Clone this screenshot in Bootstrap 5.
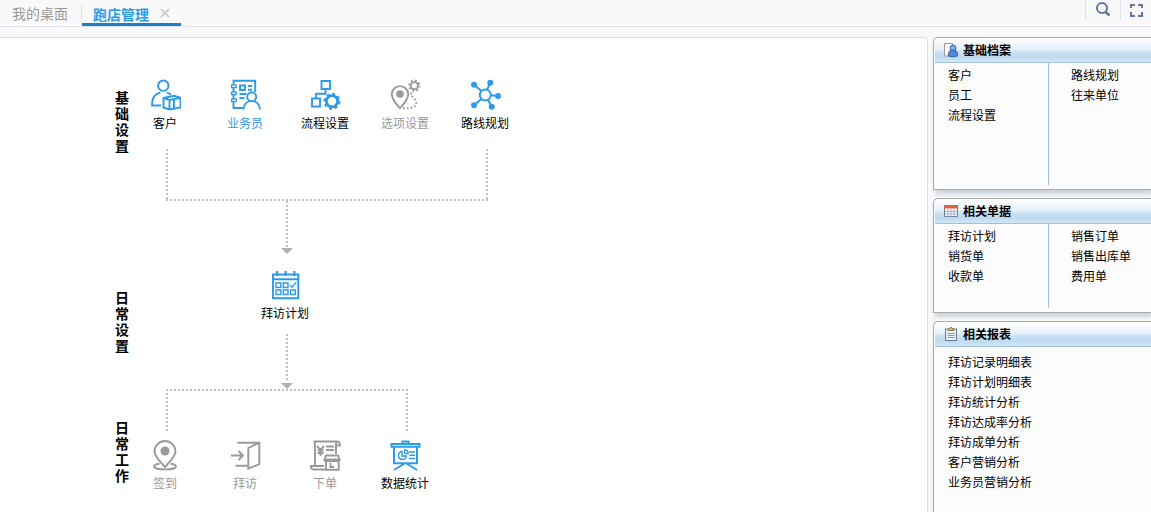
<!DOCTYPE html>
<html lang="zh-CN">
<head>
<meta charset="utf-8">
<meta name="viewport" content="width=device-width, initial-scale=1">
<title>跑店管理</title>
<link href="https://cdn.jsdelivr.net/npm/bootstrap@5.3.0/dist/css/bootstrap.min.css" rel="stylesheet">
<style>
body{font:12px/16px "Noto Sans CJK SC",sans-serif;color:#000;background:#f9f9f9}
a{color:inherit;text-decoration:none}
.topbar{height:27px;border-bottom:1px solid #e4e4ee}
.tab-item{font-size:14px;line-height:20px;color:#999;padding:3px 13px 0 12px;height:26px}
.tab-item.active{color:#2e9be6;font-weight:700;padding:0 10px 0 11px;border-bottom:3px solid #1a80c8}
.tab-item button,.tool{border:0;background:none;padding:0;line-height:0}
.tab-item button{margin:3px 0 0 10px}
.tab-sep{width:1px;height:16px;margin-top:5px;background:#e0e0ec}
.tool{width:35px;height:21px;border-left:1px solid #e4e4ee;padding-bottom:2px}
.tool:last-child{width:31px}
.workspace{padding-top:10px;gap:5px}
.canvas{background:#fff;border:1px solid #dcdcdc;border-left:0;border-bottom:0;border-radius:0 4px 0 0;padding-left:115px}
.stages{width:14px;padding-top:51px}
.stages h2{font-size:14px;line-height:16px;font-weight:700;margin:0 0 136px}
.stages h2+h2{margin-bottom:66px}
.stages h2:last-child{margin-bottom:0}
.flow{padding-top:41px}
.node{width:72px;display:flex;flex-direction:column;align-items:center;gap:4px;color:#000;white-space:nowrap}
.node svg{width:32px;height:32px;color:#2e9be6;fill:none;stroke:currentColor;stroke-width:1.9}
.node .solid{fill:currentColor;stroke:none}
.node.off,.node.off svg{color:#999}
.node.current{color:#2e9be6}
.link-lines{display:block;fill:none;stroke:#c0c0c0;stroke-width:2;stroke-dasharray:2 2}
.link-lines polygon{fill:#b0b0b0;stroke:none}
.mid{margin:14px 0 0 120px}
aside{width:218px;gap:8px}
.pane{background:#fcfcfc;border:1px solid #aaa;border-right:0;border-radius:5px 0 0 0;box-shadow:2px 4px 5px #c8d2da}
.pane:last-child{border-bottom:0}
.pane h3{font-size:12px;line-height:24px;height:25px;font-weight:700;margin:0 0 0 1px;padding-left:9px;gap:5px;background:linear-gradient(#fff,#e8f2fa 45%,#c6dff2 62%,#bedaf0 80%,#d3e7f6);border-bottom:1px solid #a3c1dc;border-radius:4px 0 0 0}
.pane ul{list-style:none;margin:0;padding:2px 0 0 14px;line-height:20px}
.pane .first{width:115px;border-right:1px solid #9fc0da}
.pane .first+ul{padding-left:22px}
.archive{height:122px}
.docs{height:84px}
.pane .reports{padding-top:5px}
</style>
</head>
<body class="vh-100 d-flex flex-column overflow-hidden">
<header class="topbar d-flex flex-shrink-0">
  <nav class="d-flex">
    <a class="tab-item" href="#">我的桌面</a>
    <span class="tab-sep"></span>
    <div class="tab-item active d-flex align-items-center"><a class="pt-1" href="#">跑店管理</a><button type="button" aria-label="关闭"><svg width="12" height="12" stroke="#c4c4c4" stroke-width="1.5"><path d="M2 2l8 8M10 2l-8 8"/></svg></button></div>
  </nav>
  <div class="d-flex ms-auto">
    <button class="tool" type="button" aria-label="搜索"><svg width="16" height="18" fill="none" stroke="#62759b" stroke-width="2"><circle cx="7" cy="7" r="5"/><path d="M10.500 11l4 3.500" stroke-width="2.500"/></svg></button>
    <button class="tool" type="button" aria-label="全屏"><svg width="14" height="18" fill="none" stroke="#62759b" stroke-width="2"><path d="M2 7V4h4M9 4h4v3M13 11v4H9M6 15H2v-4"/></svg></button>
  </div>
</header>
<div class="workspace d-flex flex-grow-1">
  <main class="canvas flex-grow-1 d-flex">
    <div class="stages">
      <h2>基础设置</h2><h2>日常设置</h2><h2>日常工作</h2>
    </div>
    <div class="flow">
      <div class="d-flex gap-2">
        <a class="node" href="#"><svg viewBox="0 0 32 32"><circle cx="14.300" cy="6.700" r="5.200"/><path d="M12 26.500H3.200C2.500 19.500 6 15 11.500 13.400M17.500 13.400c2 .5 3.200 1.200 4.500 2.400M14.500 19l11-2.200 6 2v9.700l-11 2-6-2zM14.500 19l6 2 11-2.200M20.500 21v9.500M25 20v9"/></svg>客户</a>
        <a class="node current" href="#"><svg viewBox="0 0 32 32"><path d="M13.500 29H4.500V1.800h21.700V13M11 6.500h5v4.500h-5zM19 7h4M19 10.700h4M10.500 15h7M10.500 19h5M14.500 30.500c0-4 2.500-7 6-8.500M25 22c3.500 1.500 5.800 4.500 6 8.500"/><circle cx="22.700" cy="17.800" r="4.500"/><g fill="#fff" stroke-width="1.300"><rect x="2.600" y="6" width="4.600" height="2.600"/><rect x="2.600" y="13" width="4.600" height="2.600"/><rect x="2.600" y="20" width="4.600" height="2.600"/></g></svg>业务员</a>
        <a class="node" href="#"><svg viewBox="0 0 32 32"><path d="M12.500 2h8.500v8h-8.500zM3 19.500h8v8H3zM16.500 10v4.800H7v4.700"/><circle cx="23" cy="22.300" r="5.600" stroke-width="2.800"/><circle cx="23" cy="22.300" r="7.500" stroke-width="2" stroke-dasharray="2.900 2.990"/></svg>流程设置</a>
        <a class="node off" href="#"><svg viewBox="0 0 32 32"><path d="M11 29.200C8 26 2.800 20 2.800 15.300a8.200 8.200 0 0 1 16.400 0C19.200 20 14 26 11 29.200z"/><circle class="solid" cx="11" cy="15" r="3.800"/><circle cx="25.300" cy="6.700" r="3.600"/><circle cx="25.300" cy="6.700" r="5.200" stroke-dasharray="1.800 2.280"/><path d="M22.500 13.500c-1 2.500 0 3.500 2 5.500 3.500 3.500 4 7-.5 9.200-3 1.200-7 1.200-11.500 1" stroke-dasharray="1.800 1.900"/></svg>选项设置</a>
        <a class="node" href="#"><svg viewBox="0 0 32 32"><circle cx="16.300" cy="16" r="5.500" stroke-width="2"/><path d="M12.400 12L5 5.700M18 10.800l3.300-7.100M21.800 16.200l7.500.8M19 20.800l3.700 6.900M12.400 20L5 26.300" stroke-width="2"/><g class="solid"><circle cx="5" cy="5.700" r="3"/><circle cx="21.300" cy="3.700" r="3"/><circle cx="29" cy="17" r="3"/><circle cx="22.700" cy="27.700" r="3"/><circle cx="5" cy="26.300" r="3"/></g></svg>路线规划</a>
      </div>
      <svg class="link-lines mt-3" width="362" height="108" viewBox="0 0 362 108"><path d="M38 2v50M358 2v50M37 53h322M158 54v46"/><polygon points="152,101 164,101 158,107"/></svg>
      <a class="node mid" href="#"><svg viewBox="0 0 32 32"><path d="M4 5.500h25.300v23.700H4zM4 10.300h25.300" /><path d="M8 2v5M16.700 2v5M25.300 2v5" stroke-width="2.200"/><path d="M7 14h4.800v4.500H7zM14.200 14H19v4.500h-4.800zM7 21h4.800v4.500H7zM14.200 21H19v4.500h-4.800zM21.500 21h4.800v4.500h-4.800zM21 16l2 2.300 4.300-5" stroke-width="1.400"/></svg>拜访计划</a>
      <svg class="link-lines mt-2" width="362" height="102" viewBox="0 0 362 102"><path d="M158 5v48M37 61h242M38 64v38M278 64v38"/><polygon points="152,54 164,54 158,60"/></svg>
      <div class="d-flex gap-2 pt-2">
        <a class="node off" href="#"><svg viewBox="0 0 32 32"><path d="M16 28C12 23.500 5.500 17.500 5.500 12.500a10.500 10.500 0 0 1 21 0C26.500 17.500 20 23.500 16 28z"/><circle class="solid" cx="16" cy="12" r="4.500"/><path d="M10.500 24.700c-3.500.5-5.500 1.400-5.500 2.700 0 1.800 5 3 11 3s11-1.200 11-3c0-1.300-2-2.200-5.500-2.700"/></svg>签到</a>
        <a class="node off" href="#"><svg viewBox="0 0 32 32"><path d="M8.500 3.700h21.800v21.500l-11 4.500V9l11-5.300M6.500 26.700h12.800M2 16.500h12M9.500 12l4.500 4.500L9.500 21"/></svg>拜访</a>
        <a class="node off" href="#"><svg viewBox="0 0 32 32"><path d="M16 30.500H4.500c-2 0-2.700-1.500-2.500-3.500h4V4.500C6 3 5 2.500 4.500 2.500h23c2.500 0 3.500 1 3.500 4h-4M27 3v12M2 27h13M8 7l3.500 4L15 7M11.500 11v6M8.500 11.500h6M8.500 14h6M17 7.500h8M17 11h8M17 16.500h12l1.500 4h-15zM17 21v9.700h12.700V21M21.500 24v4H25"/><path d="M15.500 20c0 3 3.700 3 3.700 0 0 3 3.800 3 3.800 0 0 3 3.800 3 3.800 0 0 3 3.700 3 3.700 0"/></svg>下单</a>
        <a class="node" href="#"><svg viewBox="0 0 32 32"><path d="M2.500 5h28v2.700h-28zM5 8v16.300h23V8M13.500 5V2.500h6V5M15.500 24.500L5 31M17.500 24.500L28 31" stroke-width="2"/><path d="M13 12.500a4 4 0 1 0 4.500 4.500H13zM15.500 10.800v3.700h3.700a4 4 0 0 0-3.700-3.700M20 13h6M20.500 16.300H26M20 19.500h6" stroke-width="1.400"/></svg>数据统计</a>
      </div>
    </div>
  </main>
  <aside class="d-flex flex-column flex-shrink-0">
    <section class="pane">
      <h3 class="d-flex align-items-center"><svg width="14" height="16"><path d="M.5 1.500h8V14h-8z" fill="#fff" stroke="#999"/><circle cx="9" cy="6" r="3" fill="#83aee8" stroke="#3b69b5"/><path d="M4.500 14c-1-4 1.500-6 4.500-6s5.500 2 4.500 6c-2 1-7 1-9 0z" fill="#4f86d6" stroke="#3560a8"/></svg>基础档案</h3>
      <div class="d-flex archive"><ul class="first"><li><a href="#">客户</a></li><li><a href="#">员工</a></li><li><a href="#">流程设置</a></li></ul><ul><li><a href="#">路线规划</a></li><li><a href="#">往来单位</a></li></ul></div>
      <div class="pb-1"></div>
    </section>
    <section class="pane">
      <h3 class="d-flex align-items-center"><svg width="14" height="14"><path d="M.5 1.500h13v11H.5z" fill="#fff" stroke="#6f7d98"/><path d="M0 1h14v3.500H0z" fill="#d9613e"/><path d="M1 7.500h12M1 10h12M4 5v7.500M7 5v7.500M10 5v7.500" stroke="#a5b3cc"/></svg>相关单据</h3>
      <div class="d-flex docs"><ul class="first"><li><a href="#">拜访计划</a></li><li><a href="#">销货单</a></li><li><a href="#">收款单</a></li></ul><ul><li><a href="#">销售订单</a></li><li><a href="#">销售出库单</a></li><li><a href="#">费用单</a></li></ul></div>
      <div class="pb-1"></div>
    </section>
    <section class="pane flex-grow-1">
      <h3 class="d-flex align-items-center"><svg width="14" height="16"><path d="M1.500 3h11v11.500h-11z" fill="#e9effb" stroke="#66759f"/><path d="M3.500 7.500h7M3.500 9.500h7M3.500 11.500h7" stroke="#8095cc"/><path d="M4 4.500V3h1.500a1.500 1.500 0 0 1 3 0H10v1.500z" fill="#d9c27a" stroke="#907a42"/></svg>相关报表</h3>
      <ul class="reports"><li><a href="#">拜访记录明细表</a></li><li><a href="#">拜访计划明细表</a></li><li><a href="#">拜访统计分析</a></li><li><a href="#">拜访达成率分析</a></li><li><a href="#">拜访成单分析</a></li><li><a href="#">客户营销分析</a></li><li><a href="#">业务员营销分析</a></li></ul>
    </section>
  </aside>
</div>
<script src="https://cdn.jsdelivr.net/npm/bootstrap@5.3.0/dist/js/bootstrap.bundle.min.js"></script>
</body>
</html>
